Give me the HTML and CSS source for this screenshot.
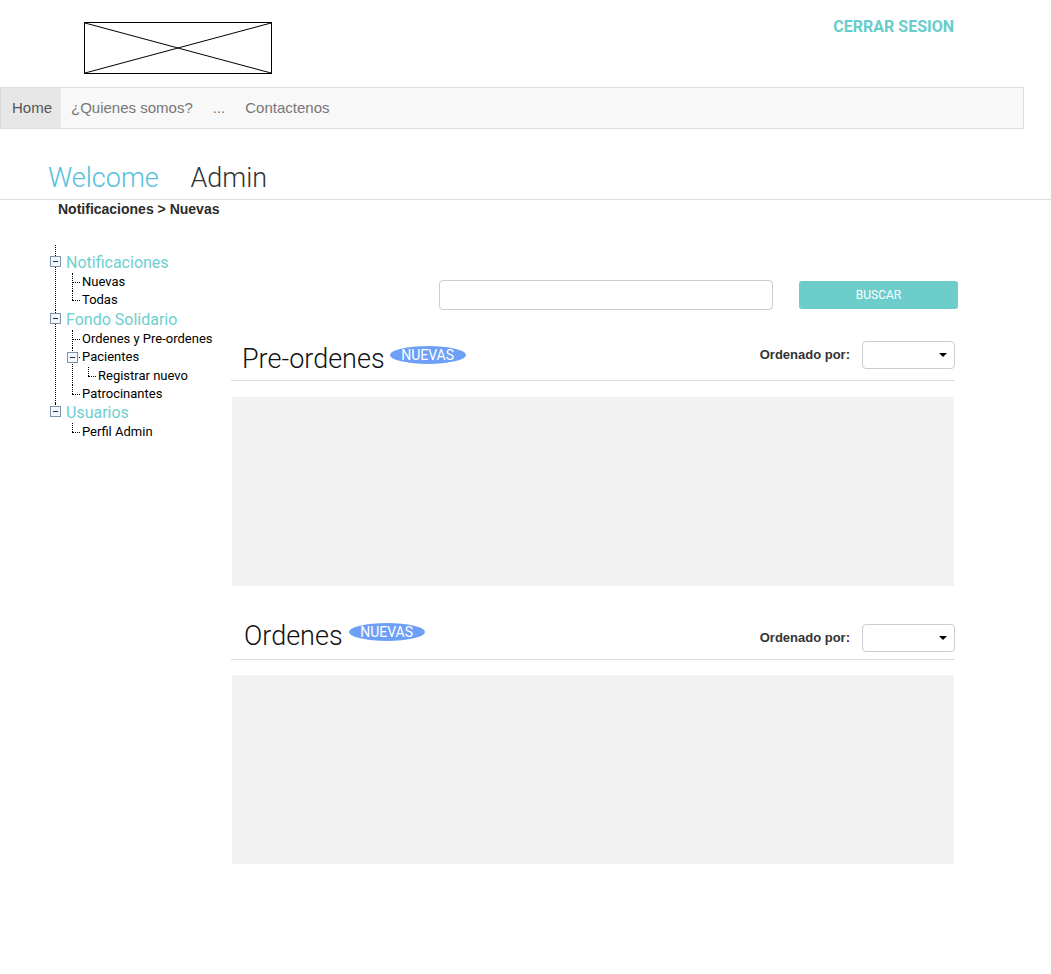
FILE: index.html
```html
<!DOCTYPE html>
<html lang="es">
<head>
<meta charset="utf-8">
<title>Admin</title>
<link rel="stylesheet" href="styles.css">
</head>
<body>
<header class="top">
  <div class="logo">
    <svg width="188" height="52" viewBox="0 0 188 52">
      <rect x="0.5" y="0.5" width="187" height="51" fill="#fff" stroke="#000" stroke-width="1"/>
      <line x1="1" y1="1" x2="187" y2="51" stroke="#000" stroke-width="1"/>
      <line x1="1" y1="51" x2="187" y2="1" stroke="#000" stroke-width="1"/>
    </svg>
  </div>
  <a class="logout" href="#">CERRAR SESION</a>
</header>

<nav class="navbar">
  <a class="nav-item active" href="#">Home</a>
  <a class="nav-item" href="#">¿Quienes somos?</a>
  <a class="nav-item" href="#">...</a>
  <a class="nav-item" href="#">Contactenos</a>
</nav>

<div class="welcome">
  <span class="welcome-word">Welcome</span>
  <span class="welcome-user">Admin</span>
</div>
<div class="breadcrumb">Notificaciones &gt; Nuevas</div>

<div class="main">
  <aside class="sidebar">
    <ul class="tree">
      <li class="top-item">
        <svg class="toggle" width="11" height="11" viewBox="0 0 11 11"><rect x="0.5" y="0.5" width="10" height="10" fill="#f4f6f9" stroke="#7b90ab"/><line x1="3" y1="5.5" x2="8" y2="5.5" stroke="#1f2d4a"/></svg>
        <span class="top-label">Notificaciones</span>
        <ul class="sub">
          <li><span class="sub-label">Nuevas</span></li>
          <li><span class="sub-label">Todas</span></li>
        </ul>
      </li>
      <li class="top-item">
        <svg class="toggle" width="11" height="11" viewBox="0 0 11 11"><rect x="0.5" y="0.5" width="10" height="10" fill="#f4f6f9" stroke="#7b90ab"/><line x1="3" y1="5.5" x2="8" y2="5.5" stroke="#1f2d4a"/></svg>
        <span class="top-label">Fondo Solidario</span>
        <ul class="sub">
          <li><span class="sub-label">Ordenes y Pre-ordenes</span></li>
          <li>
            <svg class="toggle sub-toggle" width="11" height="11" viewBox="0 0 11 11"><rect x="0.5" y="0.5" width="10" height="10" fill="#f4f6f9" stroke="#7b90ab"/><line x1="3" y1="5.5" x2="8" y2="5.5" stroke="#1f2d4a"/></svg>
            <span class="sub-label">Pacientes</span>
            <ul class="sub">
              <li><span class="sub-label">Registrar nuevo</span></li>
            </ul>
          </li>
          <li><span class="sub-label">Patrocinantes</span></li>
        </ul>
      </li>
      <li class="top-item">
        <svg class="toggle" width="11" height="11" viewBox="0 0 11 11"><rect x="0.5" y="0.5" width="10" height="10" fill="#f4f6f9" stroke="#7b90ab"/><line x1="3" y1="5.5" x2="8" y2="5.5" stroke="#1f2d4a"/></svg>
        <span class="top-label">Usuarios</span>
        <ul class="sub">
          <li><span class="sub-label">Perfil Admin</span></li>
        </ul>
      </li>
    </ul>
  </aside>

  <section class="content">
    <div class="search-row">
      <input class="search-input" type="text">
      <button class="search-btn" type="button">BUSCAR</button>
    </div>

    <div class="sec-head sec-head-first">
      <h2 class="sec-title">Pre-ordenes</h2>
      <span class="badge">NUEVAS</span>
      <span class="sort-label">Ordenado por:</span>
      <div class="select"><span class="caret"></span></div>
    </div>
    <div class="panel panel-first"></div>

    <div class="sec-head sec-head-second">
      <h2 class="sec-title">Ordenes</h2>
      <span class="badge">NUEVAS</span>
      <span class="sort-label">Ordenado por:</span>
      <div class="select"><span class="caret"></span></div>
    </div>
    <div class="panel panel-second"></div>
  </section>
</div>
</body>
</html>
```

FILE: styles.css
```css
* { box-sizing: border-box; }

body {
  margin: 0;
  background: #fff;
  font-family: Roboto, "Liberation Sans", Arial, sans-serif;
  color: #333;
  width: 1051px;
  min-height: 974px;
}

/* header */
.top {
  height: 87px;
  display: flex;
  justify-content: space-between;
  align-items: flex-start;
  padding: 0 97px 0 84px;
}
.logo {
  margin-top: 22px;
  height: 52px;
}
.logo svg { display: block; }
.logout {
  margin-top: 17px;
  font-family: Roboto, sans-serif;
  font-weight: 700;
  font-size: 16px;
  line-height: 19px;
  color: #66cccc;
  text-decoration: none;
}

/* navbar */
.navbar {
  width: 1024px;
  height: 42px;
  background: #f8f8f8;
  border: 1px solid #dcdcdc;
  display: flex;
}
.nav-item {
  display: block;
  padding: 0 10px;
  line-height: 40px;
  font-family: "Liberation Sans", Arial, sans-serif;
  font-size: 15px;
  color: #777;
  text-decoration: none;
}
.nav-item.active {
  background: #e7e7e7;
  color: #555;
  padding: 0 9px 0 11px;
}

/* welcome */
.welcome {
  height: 71px;
  border-bottom: 1px solid #dddddd;
  padding: 33px 0 0 48px;
  font-family: Roboto, sans-serif;
  font-weight: 300;
  font-size: 27px;
  line-height: 32px;
  white-space: nowrap;
}
.welcome-word { color: #55c0dc; }
.welcome-user { color: #333; margin-left: 25px; }

.breadcrumb {
  padding-left: 58px;
  font-family: "Liberation Sans", Arial, sans-serif;
  font-weight: 700;
  font-size: 14px;
  line-height: 18px;
  color: #2b2b2b;
}

/* main */
.main {
  display: flex;
  align-items: flex-start;
}
.sidebar {
  margin-left: 50px;
  width: 181px;
  padding-top: 35px;
}

/* tree */
.tree, .sub {
  list-style: none;
  margin: 0;
  padding: 0;
}
.tree > li {
  position: relative;
  padding-left: 16px;
}
.tree > li::before {
  content: "";
  position: absolute;
  left: 5px;
  top: 0;
  bottom: 0;
  border-left: 1px dotted #000;
}
.tree > li:first-child::before { top: -8px; }
.tree > li:last-child::before { bottom: auto; height: 10px; }

.toggle {
  position: absolute;
  display: block;
  z-index: 1;
}
.tree > li > .toggle { left: 0; top: 3px; }
.top-label {
  display: block;
  font-size: 16px;
  line-height: 20px;
  color: #6ecfcf;
}
.sub { padding-left: 16px; }
.sub > li {
  position: relative;
}
.sub > li::before {
  content: "";
  position: absolute;
  left: -10px;
  top: 0;
  height: 100%;
  border-left: 1px dotted #000;
}
.sub > li:last-child::before { height: 9px; }
.sub > li::after {
  content: "";
  position: absolute;
  left: -10px;
  top: 9px;
  width: 8px;
  border-top: 1px dotted #000;
}
.sub-toggle { left: -15px; top: 4px; }
.sub-label {
  display: block;
  font-size: 13px;
  line-height: 18.4px;
  color: #000;
  white-space: nowrap;
}

/* content */
.content {
  width: 727px;
  padding-top: 62px;
}
.search-row {
  display: flex;
  align-items: flex-start;
  padding-left: 208px;
}
.search-input {
  width: 334px;
  height: 30px;
  border: 1px solid #cccccc;
  border-radius: 4px;
  background: #fff;
  margin: 0;
}
.search-btn {
  margin: 1px 0 0 26px;
  width: 159px;
  height: 28px;
  border: 0;
  border-radius: 3px;
  background: #6ccdcb;
  color: #fff;
  font-family: Roboto, sans-serif;
  font-size: 12px;
  padding: 0;
}

.sec-head {
  width: 724px;
  display: flex;
  align-items: flex-start;
  border-bottom: 1px solid #dddddd;
}
.sec-head-first { margin-top: 31px; height: 40px; }
.sec-head-second { margin-top: 38px; height: 36px; }

.sec-title {
  margin: 0;
  font-family: Roboto, sans-serif;
  font-weight: 300;
  font-size: 27px;
  line-height: 28px;
  color: #111;
  white-space: nowrap;
}
.sec-head-first .sec-title { margin-top: 4px; padding-left: 11px; }
.sec-head-second .sec-title { margin-top: -2px; padding-left: 13px; }

.badge {
  display: block;
  width: 76px;
  height: 18px;
  border-radius: 50%;
  background: #6e9ff7;
  color: #fff;
  font-family: Roboto, sans-serif;
  font-size: 14px;
  line-height: 18px;
  text-align: center;
}
.sec-head-first .badge { margin: 5px 0 0 5px; }
.sec-head-second .badge { margin: -1px 0 0 6px; }

.sort-label {
  margin-left: auto;
  font-family: "Liberation Sans", Arial, sans-serif;
  font-weight: 700;
  font-size: 13px;
  line-height: 28px;
  color: #333;
}
.select {
  margin-left: 12px;
  width: 93px;
  height: 28px;
  border: 1px solid #cccccc;
  border-radius: 4px;
  background: #fff;
  position: relative;
}
.caret {
  position: absolute;
  right: 7px;
  top: 11px;
  width: 0;
  height: 0;
  border-left: 4px solid transparent;
  border-right: 4px solid transparent;
  border-top: 4px solid #000;
}

.panel {
  width: 722px;
  height: 189px;
  margin-left: 1px;
  background: #f2f2f2;
}
.panel-first { margin-top: 16px; }
.panel-second { margin-top: 15px; }
```
